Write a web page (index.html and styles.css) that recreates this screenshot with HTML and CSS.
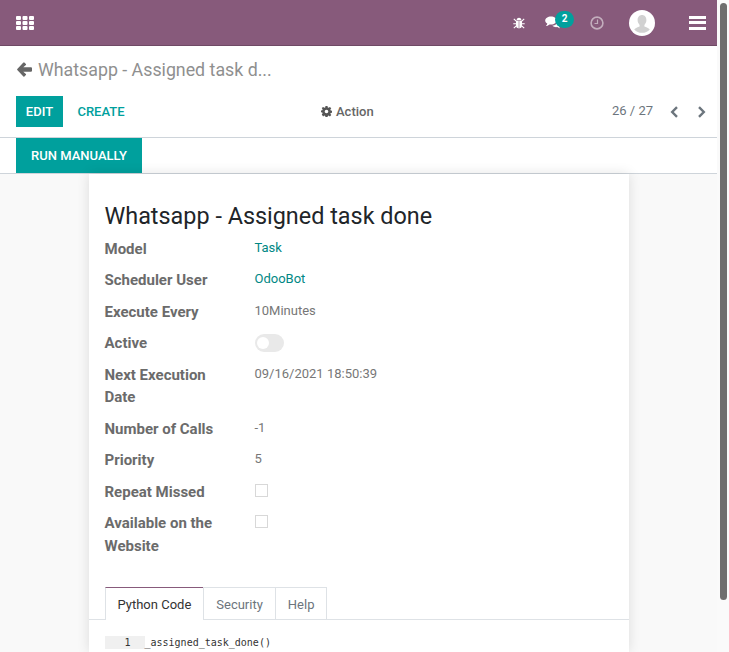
FILE: index.html
```html
<!DOCTYPE html>
<html lang="en">
<head>
    <meta charset="UTF-8">
    <title>Whatsapp - Assigned task done</title>
    <link rel="stylesheet" href="styles.css">
</head>
<body>
    <div class="page">
        <nav class="navbar">
            <svg class="apps" width="18" height="14" viewBox="0 0 18 14" fill="#fff">
                <rect x="0" y="0" width="5" height="4" rx="1"/><rect x="6.5" y="0" width="5" height="4" rx="1"/><rect x="13" y="0" width="5" height="4" rx="1"/>
                <rect x="0" y="5" width="5" height="4" rx="1"/><rect x="6.5" y="5" width="5" height="4" rx="1"/><rect x="13" y="5" width="5" height="4" rx="1"/>
                <rect x="0" y="10" width="5" height="4" rx="1"/><rect x="6.5" y="10" width="5" height="4" rx="1"/><rect x="13" y="10" width="5" height="4" rx="1"/>
            </svg>
            <div class="nav-right">
                <svg class="bug" width="12" height="12" viewBox="0 0 12 12" fill="#fff">
                    <path d="M3.6 3.2C3.8 1.6 4.8.8 6 .8s2.2.8 2.4 2.4z"/>
                    <path d="M3 3.8h2.7V11.5C3.9 11.3 3 10 3 8.300zM6.300 3.800H9V8.300c0 1.700-.9 3-2.700 3.200z"/>
                    <path d="M.8 1.800l2.400 2.400M11.200 1.800L8.800 4.200M.3 6.800H3M9 6.800h2.700M.8 11.200l2.500-2.400M11.200 11.200L8.700 8.800" stroke="#fff" stroke-width="1.100" fill="none"/>
                </svg>
                <div class="messages">
                    <svg width="16" height="13" viewBox="0 0 16 13" fill="#fff">
                        <path d="M6 .5c3.200 0 5.800 1.800 5.800 4s-2.600 4-5.800 4c-.5 0-1 0-1.500-.1C3.600 9.300 2.400 9.900 1 10c.7-.7 1.200-1.500 1.300-2.500C1 6.800.2 5.700.2 4.500c0-2.200 2.600-4 5.800-4z"/>
                        <path d="M12.800 4.600c1.700.6 2.900 1.800 2.900 3.200 0 1-.6 1.900-1.600 2.500.1.800.5 1.500 1.200 2.100-1.200-.1-2.200-.6-3-1.300-2 .3-3.800-.2-5-1.300 3 0 5.500-2.400 5.500-5.200z"/>
                    </svg>
                    <span class="badge">2</span>
                </div>
                <svg class="clock" width="14" height="14" viewBox="0 0 14 14" fill="none" stroke="#c3aebd" stroke-width="1.600">
                    <circle cx="7" cy="7" r="5.900"/>
                    <path d="M7.500 3.500V7.500H4.500" stroke-width="1.200"/>
                </svg>
                <svg class="avatar" width="26" height="26" viewBox="0 0 26 26">
                    <circle cx="13" cy="13" r="13" fill="#fff"/>
                    <path d="M13 5c2.700 0 4.400 2.200 4.400 5.100 0 2-.8 3.700-2 4.800v1.500c1.900.8 4.200 1.600 5.400 3a10.600 10.600 0 0 1-15.600 0c1.200-1.400 3.500-2.200 5.400-3v-1.500c-1.200-1.100-2-2.800-2-4.800C8.600 7.200 10.300 5 13 5z" fill="#d1d1d1"/>
                </svg>
                <div class="burger"><span></span><span></span><span></span></div>
            </div>
        </nav>

        <div class="control-panel">
            <div class="breadcrumb">
                <svg width="15" height="15" viewBox="0 0 15 15" fill="#666">
                    <path d="M7.400.6 8.900 2.100c.3.300.3.700 0 1L6.300 5.300h7.800c.5 0 .9.400.9.900v2.600c0 .5-.4.900-.9.900H6.300l2.600 2.200c.3.300.3.700 0 1l-1.500 1.500c-.3.300-.7.300-1 0L.3 8c-.3-.3-.3-.7 0-1L6.400.6c.3-.3.700-.3 1 0z"/>
                </svg>
                <span>Whatsapp - Assigned task d...</span>
            </div>
            <div class="buttons-row">
                <div class="buttons-left">
                    <button class="btn btn-primary">EDIT</button>
                    <button class="btn btn-link">CREATE</button>
                </div>
                <div class="action">
                    <svg width="11" height="11" viewBox="0 0 12 12" fill="#555">
                        <path fill-rule="evenodd" d="M4.900 0h2.200l.3 1.600.9.400L9.700 1l1.500 1.500-1 1.400.4.900 1.600.3v2.200l-1.600.3-.4.900 1 1.400-1.500 1.500-1.400-1-.9.400-.3 1.600H4.900l-.3-1.600-.9-.4-1.400 1L.8 9.300l1-1.400-.4-.9L0 6.700V4.900l1.400-.3.400-.9-1-1.400L2.300 1l1.400 1 .9-.4zM6 4a2 2 0 1 0 0 4 2 2 0 0 0 0-4z"/>
                    </svg>
                    <span>Action</span>
                </div>
                <div class="pager">
                    <span class="pager-value">26 / 27</span>
                    <svg width="9" height="12" viewBox="0 0 9 12" fill="none" stroke="#6c757d" stroke-width="2.400"><path d="M7 1.200 2.200 6 7 10.800"/></svg>
                    <svg width="9" height="12" viewBox="0 0 9 12" fill="none" stroke="#6c757d" stroke-width="2.400"><path d="M2 1.200 6.800 6 2 10.800"/></svg>
                </div>
            </div>
        </div>

        <div class="statusbar">
            <button class="btn btn-primary btn-run">RUN MANUALLY</button>
        </div>

        <div class="form-view">
            <div class="sheet">
                <h1>Whatsapp - Assigned task done</h1>
                <div class="fields">
                    <div class="field-label">Model</div>
                    <div class="field-value"><a class="link">Task</a></div>
                    <div class="field-label">Scheduler User</div>
                    <div class="field-value"><a class="link">OdooBot</a></div>
                    <div class="field-label">Execute Every</div>
                    <div class="field-value">10Minutes</div>
                    <div class="field-label">Active</div>
                    <div class="field-value"><span class="toggle"><span class="knob"></span></span></div>
                    <div class="field-label">Next Execution Date</div>
                    <div class="field-value">09/16/2021 18:50:39</div>
                    <div class="field-label">Number of Calls</div>
                    <div class="field-value">-1</div>
                    <div class="field-label">Priority</div>
                    <div class="field-value">5</div>
                    <div class="field-label">Repeat Missed</div>
                    <div class="field-value"><span class="checkbox"></span></div>
                    <div class="field-label">Available on the Website</div>
                    <div class="field-value"><span class="checkbox"></span></div>
                </div>
                <div class="tabs">
                    <div class="tab active">Python Code</div>
                    <div class="tab">Security</div>
                    <div class="tab">Help</div>
                </div>
                <div class="code-line">
                    <span class="gutter">1</span><span class="code">_assigned_task_done()</span>
                </div>
            </div>
        </div>
    </div>
    <div class="scrollbar"><div class="thumb"></div></div>
</body>
</html>
```

FILE: styles.css
```css
html, body {
    height: 100%;
}
body {
    margin: 0;
    display: flex;
    height: 652px;
    overflow: hidden;
    background: #fff;
    font-family: Roboto, "Liberation Sans", sans-serif;
    font-size: 13px;
    color: #4c4c4c;
}
.page {
    flex: 0 0 717px;
    width: 717px;
    display: flex;
    flex-direction: column;
}
.scrollbar {
    flex: 0 0 12px;
    background: #fafafa;
    padding: 3px 2px 0 3px;
    box-sizing: border-box;
}
.thumb {
    width: 7px;
    height: 597px;
    background: #6e6e6e;
    border-radius: 4px;
}
.navbar {
    flex: 0 0 46px;
    box-sizing: border-box;
    display: flex;
    justify-content: space-between;
    align-items: center;
    padding: 0 11px 0 16px;
    background: #875a7b;
    border-bottom: 1px solid #6f4a65;
}
.nav-right {
    display: flex;
    align-items: center;
}
.bug {
    margin-right: 20px;
}
.messages {
    position: relative;
    width: 16px;
    height: 13px;
    margin-right: 29px;
}
.badge {
    position: absolute;
    left: 10px;
    top: -5px;
    width: 19px;
    height: 17px;
    border-radius: 9px;
    background: #00a09d;
    color: #fff;
    font-size: 10px;
    font-weight: 700;
    line-height: 16px;
    text-align: center;
}
.clock {
    margin-right: 25px;
}
.avatar {
    margin-right: 34px;
}
.burger {
    display: flex;
    flex-direction: column;
    gap: 2.5px;
    width: 17px;
}
.burger span {
    height: 3px;
    background: #fff;
}
.control-panel {
    flex: 0 0 92px;
    box-sizing: border-box;
    padding: 11px 16px 0;
    border-bottom: 1px solid #ced4da;
}
.breadcrumb {
    display: flex;
    align-items: center;
    gap: 6px;
    height: 24px;
    font-size: 17.800px;
    color: #8f8f8f;
    margin-bottom: 15px;
    margin-left: 1px;
}
.buttons-row {
    display: flex;
    align-items: center;
    position: relative;
}
.buttons-left {
    display: flex;
    width: 305px;
}
.btn {
    border: none;
    font-family: inherit;
    font-size: 13px;
    font-weight: 500;
    padding: 0;
}
.btn-primary {
    background: #00a09d;
    color: #fff;
}
.btn-link {
    background: none;
    color: #00a09d;
}
.buttons-left .btn {
    height: 31px;
    width: 47px;
}
.buttons-left .btn-link {
    width: 76px;
}
.action {
    display: flex;
    align-items: center;
    gap: 4px;
    font-size: 13px;
    font-weight: 500;
    color: #666;
}
.pager {
    margin-left: auto;
    display: flex;
    align-items: center;
    gap: 0;
    margin-right: -5px;
}
.pager-value {
    margin-right: 17px;
    color: #6c757d;
    margin-top: -2px;
}
.pager svg + svg {
    margin-left: 18px;
}
.statusbar {
    flex: 0 0 36px;
    box-sizing: border-box;
    padding: 0 16px;
    border-bottom: 1px solid #ced4da;
}
.btn-run {
    display: block;
    width: 126px;
    height: 35px;
}
.form-view {
    flex: 1;
    min-height: 0;
    background: #f9f9f9;
    display: flex;
    justify-content: center;
}
.sheet {
    width: 540px;
    box-sizing: border-box;
    background: #fff;
    padding: 26px 0 0;
    box-shadow: 0 0 12px rgba(0, 0, 0, 0.12);
}
h1 {
    margin: 0 16px 5.900px;
    font-size: 23.400px;
    font-weight: 400;
    line-height: 32px;
    color: #212529;
}
.fields {
    display: grid;
    grid-template-columns: 150px 1fr;
    padding: 0 16px;
    row-gap: 9px;
}
.field-label {
    font-size: 15px;
    font-weight: 700;
    line-height: 22.500px;
    color: #6b6b6b;
    padding-right: 30px;
}
.field-value {
    line-height: 19px;
    color: #777;
}
.link {
    color: #008784;
}
.toggle {
    display: block;
    width: 29px;
    height: 18px;
    border-radius: 9px;
    background: #e9e9e9;
    margin-top: 2px;
    position: relative;
}
.knob {
    position: absolute;
    left: 2px;
    top: 3px;
    width: 12px;
    height: 12px;
    border-radius: 50%;
    background: #fff;
}
.checkbox {
    display: block;
    box-sizing: border-box;
    width: 13px;
    height: 13px;
    border: 1px solid #d8d8d8;
    background: #fff;
    margin-top: 3px;
}
.tabs {
    display: flex;
    margin-top: 29.600px;
    padding-left: 16px;
    height: 33px;
    box-sizing: border-box;
    border-bottom: 1px solid #dee2e6;
}
.tab {
    box-sizing: border-box;
    height: 33px;
    padding: 0 12px;
    line-height: 33px;
    color: #6c757d;
    border: 1px solid #dee2e6;
    border-bottom: none;
    margin-right: -1px;
}
.tab.active {
    color: #333;
    background: #fff;
    border-top-color: #875a7b;
}
.code-line {
    display: flex;
    margin: 16px 16px 0;
    height: 13px;
    font-family: "DejaVu Sans Mono", monospace;
    font-size: 10px;
    line-height: 13px;
    color: #333;
}
.gutter {
    width: 40px;
    box-sizing: border-box;
    padding-right: 14px;
    text-align: right;
    background: #f0f0f0;
}
```
